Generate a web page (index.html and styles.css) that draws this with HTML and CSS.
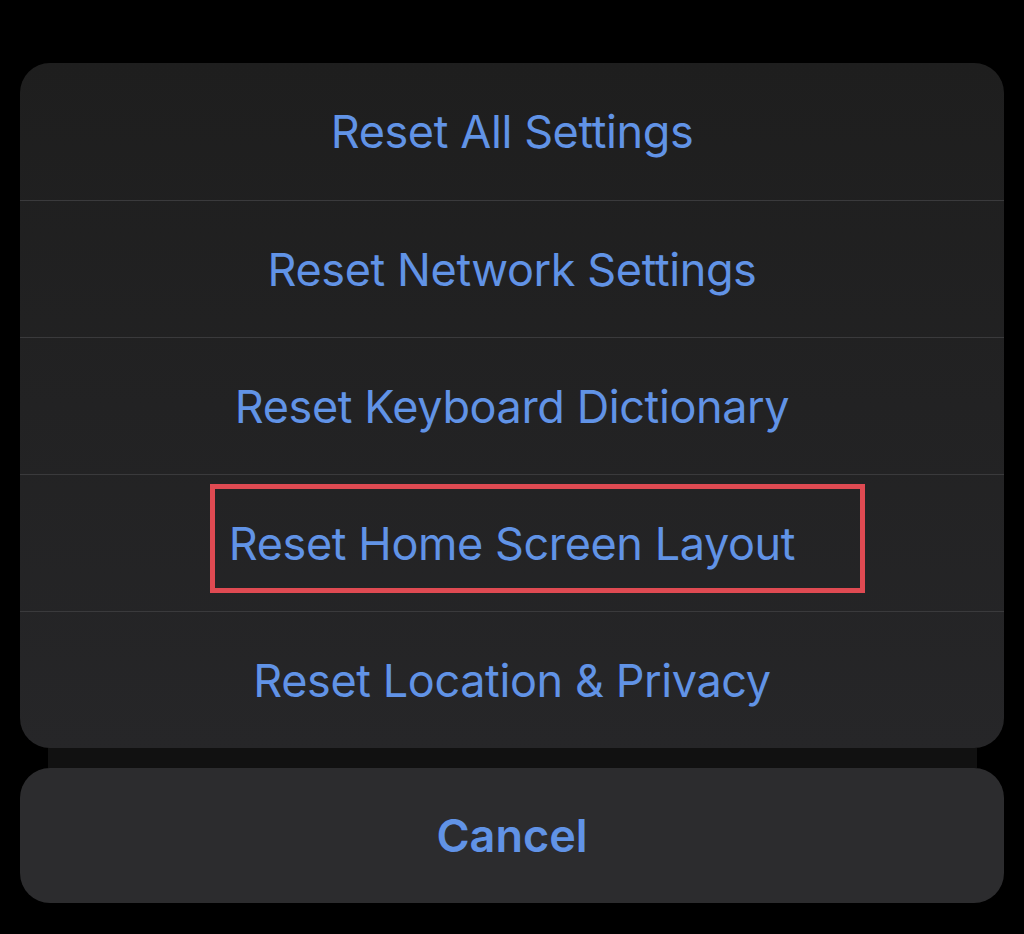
FILE: index.html
```html
<!DOCTYPE html>
<html lang="en">
<head>
    <meta charset="UTF-8">
    <meta name="viewport" content="width=device-width, initial-scale=1.0">
    <title>Reset</title>
    <link rel="stylesheet" href="styles.css">
</head>
<body>

<div class="action-sheet">
    <div class="action-group">
        <div class="action-row">Reset All Settings</div>
        <div class="action-row">Reset Network Settings</div>
        <div class="action-row">Reset Keyboard Dictionary</div>
        <div class="action-row highlighted">
            Reset Home Screen Layout
            <span class="highlight-box"></span>
        </div>
        <div class="action-row">Reset Location &amp; Privacy</div>
    </div>
    <div class="action-shadow"></div>
    <div class="action-cancel">Cancel</div>
</div>

</body>
</html>
```

FILE: styles.css
```css
body {
    font-family: Inter, "Noto Sans", sans-serif;
    margin: 0;
    padding: 0;
    background-color: #000;
    height: 934px;
    overflow: hidden;
}
.action-sheet {
    padding: 63px 20px 0 20px;
    display: flex;
    flex-direction: column;
}
.action-group {
    background: linear-gradient(#1e1e1e, #262628);
    border-radius: 30px;
    overflow: hidden;
}
.action-row {
    position: relative;
    height: 137px;
    display: flex;
    justify-content: center;
    align-items: center;
    color: #6193e6;
    font-size: 45px;
    letter-spacing: -0.4px;
    border-top: 1.5px solid #3a3a3c;
    box-sizing: border-box;
}
.action-row:first-child {
    border-top: none;
}
.highlight-box {
    position: absolute;
    left: 190px;
    top: 9px;
    width: 655px;
    height: 109px;
    border: 5px solid #df4a52;
    box-sizing: border-box;
}
.action-shadow {
    height: 20px;
    margin: 0 27px 0 28px;
    background-color: #111;
}
.action-cancel {
    height: 135px;
    background-color: #2c2c2e;
    border-radius: 30px;
    display: flex;
    justify-content: center;
    align-items: center;
    color: #6193e6;
    font-size: 45px;
    font-weight: 600;
}
```
